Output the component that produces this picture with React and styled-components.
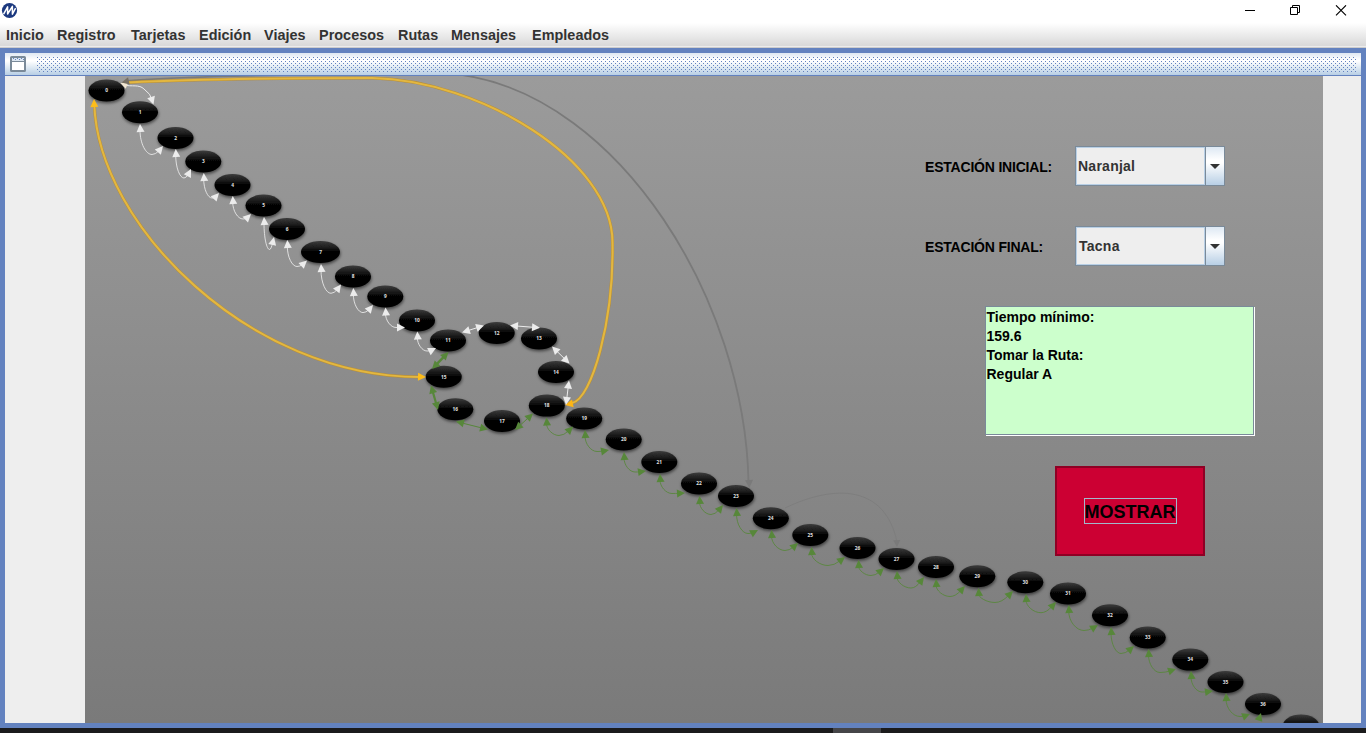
import React from 'react';
import styled, { createGlobalStyle, css } from 'styled-components';

const frame = '#6382bf';

const GlobalStyle = createGlobalStyle`
  * { box-sizing: border-box; }
  html, body { margin: 0; padding: 0; overflow: hidden; }
  body { font-family: "Liberation Sans", Arial, sans-serif; font-weight: bold; }
`;

const Window = styled.div`
  width: 1366px;
  height: 733px;
  display: flex;
  flex-direction: column;
  background: #fff;
  overflow: hidden;
`;

const TitleBar = styled.header`
  height: 23px;
  flex: none;
  display: flex;
  justify-content: space-between;
  padding: 2px 19px 0 1px;
  background: #fff;
`;

const WindowButtons = styled.div`
  display: flex;
  gap: 34px;
  padding-top: 3px;
  svg { display: block; }
`;

const MenuBar = styled.nav`
  height: 25px;
  flex: none;
  display: flex;
  gap: 13px;
  padding: 0 6px;
  background: linear-gradient(#fff 0, #dadada 22px, #dadada 23px, #ececec 23px, #ececec 24px, #cccccc 24px);
`;

const MenuItem = styled.span`
  width: ${(p) => p.$width}px;
  font-size: 14.4px;
  line-height: 24px;
  letter-spacing: 0.04px;
  white-space: nowrap;
  color: #333;
`;

const InternalFrame = styled.main`
  height: 680px;
  flex: none;
  display: flex;
  flex-direction: column;
  border: 5px solid ${frame};
`;

const FrameTitle = styled.div`
  height: 23px;
  flex: none;
  display: flex;
  align-items: flex-start;
  padding: 3px 4px 0 5px;
  gap: 11px;
  border-bottom: 1px solid ${frame};
  background: linear-gradient(#dfe8f3 0, #fff 7px, #fff 8px, #b8cfe5 22px);
  svg { flex: none; display: block; }
`;

const Grip = styled.div`
  flex: 1;
  height: 15px;
  margin-top: 1px;
  background-image:
    conic-gradient(from 270deg at 1px 1px, ${frame} 90deg, transparent 0),
    conic-gradient(from 270deg at 1px 1px, ${frame} 90deg, transparent 0);
  background-size: 4px 4px;
  background-position: 0 0, 2px 2px;
`;

const Content = styled.div`
  flex: 1;
  display: flex;
  justify-content: center;
  padding: 0 38px 0 80px;
  background: #eee;
`;

const MapPanel = styled.section`
  position: relative;
  width: 1238px;
  height: 647px;
  display: flex;
  justify-content: flex-end;
  overflow: hidden;
  background: linear-gradient(#9b9b9b, #7a7a7a);
`;

const Network = styled.svg`
  position: absolute;
  inset: 0;
`;

const Form = styled.form`
  position: relative;
  width: 398px;
  padding-top: 70px;
  display: flex;
  flex-direction: column;
  align-items: flex-start;
`;

const Field = styled.div`
  width: 300px;
  height: 40px;
  margin-bottom: 40px;
  display: flex;
  align-items: center;
  justify-content: space-between;
`;

const Label = styled.label`
  font-size: 14px;
  line-height: 16px;
  padding-top: 2px;
  letter-spacing: -0.2px;
  color: #000;
  white-space: nowrap;
`;

const Combo = styled.div`
  width: 150px;
  height: 40px;
  display: flex;
  border: 1px solid #7a8a99;
`;

const ComboValue = styled.div`
  flex: 1;
  padding-left: ${(p) => p.$indent}px;
  border: 1px solid #b8cfe5;
  background: #eee;
  color: #333;
  font-size: 14px;
  line-height: 37px;
  letter-spacing: 0.25px;
`;

const ComboArrow = styled.div`
  width: 19px;
  border-left: 1px solid #7a8a99;
  display: flex;
  align-items: center;
  justify-content: center;
  background: linear-gradient(#dde8f3, #fff 35%, #fff 42%, #b8cfe5);
  svg { display: block; margin-top: 1px; }
`;

const etched = css`
  border: 1px solid #7a8a99;
  box-shadow: 1px 1px 0 #fff;
`;

const Result = styled.div`
  ${etched}
  width: 269px;
  height: 129px;
  margin: 0 0 0 60px;
  padding: 1px 0 0 0.5px;
  background: #cfc;
  color: #000;
  font-size: 14px;
  line-height: 19px;
  white-space: pre-line;
`;

const ShowButton = styled.button`
  width: 150px;
  height: 90px;
  margin: 31px 0 0 130px;
  padding: 0;
  display: flex;
  align-items: center;
  justify-content: center;
  border: 2px solid #8f0024;
  background: #cc0033;
  color: #000;
  font: bold 18px "Liberation Sans", Arial, sans-serif;
`;

const FocusRing = styled.span`
  width: 93px;
  height: 26px;
  border: 1px solid #a3b8cc;
  line-height: 26px;
  text-align: center;
  white-space: nowrap;
`;

const TaskBar = styled.footer`
  flex: 1;
  display: flex;
  background: #1b1b1c;
`;

const ActiveTask = styled.div`
  width: 48px;
  margin-left: 833px;
  background: #454548;
`;

const menus = [
  ['Inicio', 38], ['Registro', 61], ['Tarjetas', 55], ['Edición', 52], ['Viajes', 42],
  ['Procesos', 66], ['Rutas', 40], ['Mensajes', 68], ['Empleados', 78],
];

const stations = [
  [106.5, 90.5], [140, 112.3], [175.5, 138], [203.3, 161.5], [232.5, 185], [263.5, 205.5],
  [287, 229], [320.5, 252], [353, 276.5], [385.3, 296.5], [417, 320.5], [448, 340.5],
  [496.7, 333], [539, 338.5], [556, 372], [443.7, 376.7], [455.3, 409.3], [502, 421],
  [546.8, 405.6], [584.2, 418.5], [623.7, 439.5], [659.3, 462], [699, 483.5], [736, 496],
  [770.8, 518.3], [810.3, 535], [857.5, 548], [896.5, 559], [936, 567], [977.3, 576.3],
  [1025.3, 582.3], [1068, 593.5], [1110, 615.3], [1147.7, 637.5], [1190.3, 659.6],
  [1225.5, 682], [1263, 704], [1301, 725.5],
];

const white = '#ececec';
const green = '#57873a';

// Each hop: start tip, lowest point of the sag, end tip.
const whiteHops = [
  [140, 124, 152, 154.5, 163, 146], [175.7, 149, 184, 178, 191, 169],
  [203.7, 173, 212, 198, 219, 193], [232.7, 196, 243, 219, 251, 214],
  [264, 217, 269.5, 249.5, 274, 237], [287.3, 240, 297, 266.5, 307, 260.5],
  [321, 264, 331, 293.3, 341, 284.5], [353.3, 288, 363, 312.6, 373, 305],
  [385.5, 307.5, 396, 327.5, 405, 327.5], [417.3, 331.5, 427, 351, 436, 348],
];

const greenHops = [
  [546.5, 417.5, 559, 435.5, 573, 426.5], [585, 430, 597, 451.5, 609, 450],
  [624, 452, 635, 472, 646, 471], [660, 474, 672, 493.5, 685, 493],
  [699.5, 496, 711, 514.5, 723, 505], [736.5, 508, 748, 533.5, 758, 530],
  [771.5, 530, 785, 550.5, 798, 543], [811.5, 547, 828, 565.5, 845, 557],
  [858.5, 560, 871, 575.5, 884, 568], [897, 571, 911, 588, 924, 577],
  [936, 579, 950, 596.5, 965, 586], [978.5, 588, 995, 602.5, 1013, 591],
  [1026, 594, 1041, 612.7, 1056, 602], [1068.7, 605, 1084, 630.5, 1098, 625],
  [1111, 627, 1121, 653.5, 1134, 646], [1148.5, 649, 1160, 672.5, 1176, 669],
  [1191, 671, 1202, 692, 1213, 691], [1226, 693, 1240, 716.5, 1250, 714],
];

const links = [
  { from: [462, 332.5], to: [484, 325.5], color: white },
  { from: [510, 325.5], to: [540, 327.8], color: white },
  { from: [552, 346.5], to: [569.5, 363.5], color: white },
  { from: [569, 380.5], to: [566, 405], color: white },
  { from: [432, 369], to: [448.5, 352], color: green, width: 2.4 },
  { from: [431, 385.5], to: [438, 410], color: green, width: 2.2 },
  { from: [456, 421.5], to: [488, 429.5], color: green },
  { from: [515, 430], to: [533, 413.5], color: green },
];

function Head({ x, y, angle, color, size = 8 }) {
  return (
    <path
      d={`M0 0L${-size} ${-size / 2}L${-size} ${size / 2}Z`}
      transform={`translate(${x} ${y}) rotate(${angle})`}
      fill={color}
    />
  );
}

function Hop({ points, color }) {
  const [sx, sy, bx, by, ex, ey] = points;
  const angle = (Math.atan2(ey - by, (ex - bx) * 0.65) * 180) / Math.PI;
  const rad = (angle * Math.PI) / 180;
  const tx = ex - 6 * Math.cos(rad);
  const ty = ey - 6 * Math.sin(rad);
  return (
    <g>
      <path
        d={`M${sx} ${sy + 6}C${sx} ${sy + (by - sy) * 0.65} ${bx - (bx - sx) * 0.5} ${by} ${bx} ${by}Q${(bx + tx) / 2} ${by} ${tx} ${ty}`}
        fill="none" stroke={color} strokeWidth="1" strokeOpacity="0.85"
      />
      <Head x={sx} y={sy} angle={-94} color={color} />
      <Head x={ex} y={ey} angle={angle} color={color} />
    </g>
  );
}

function Link({ from, to, color, width = 1 }) {
  const rad = Math.atan2(to[1] - from[1], to[0] - from[0]);
  const deg = (rad * 180) / Math.PI;
  const dx = 5 * Math.cos(rad);
  const dy = 5 * Math.sin(rad);
  return (
    <g>
      <line x1={from[0] + dx} y1={from[1] + dy} x2={to[0] - dx} y2={to[1] - dy} stroke={color} strokeWidth={width} />
      <Head x={from[0]} y={from[1]} angle={deg + 180} color={color} />
      <Head x={to[0]} y={to[1]} angle={deg} color={color} />
    </g>
  );
}

const expressRoutes = [
  'M94.3 104C98 225 250 377 420 377',
  'M128 82.5C200 79 290 78 372 78C480 80 612 160 612.5 242C614 320 592 399 572 403',
];

function StationNetwork() {
  return (
    <Network width="1238" height="647" viewBox="85 76 1238 647">
      <defs>
        <linearGradient id="node" x1="0" y1="0" x2="0" y2="1">
          <stop offset="0" stopColor="#3c3c3c" />
          <stop offset="0.38" stopColor="#111" />
          <stop offset="0.5" stopColor="#000" />
          <stop offset="1" stopColor="#060606" />
        </linearGradient>
        <filter id="shade" x="-20%" y="-30%" width="140%" height="170%">
          <feDropShadow dx="0.5" dy="1.7" stdDeviation="1.5" floodColor="#000" floodOpacity="0.55" />
        </filter>
      </defs>
      {stations.map(([x, y], i) => (
        <g key={i}>
          <ellipse cx={x} cy={y} rx={i === 7 ? 19.5 : 18} ry="11" fill="url(#node)" filter="url(#shade)" />
          {y < 720 && (
            <text x={x} y={y + 1.8} fontSize="4.8" textAnchor="middle" fill="#e2e2e2" fontFamily="Open Sans" fontWeight="bold">{i}</text>
          )}
        </g>
      ))}
      <g fill="none">
        <path d="M126 81C180 76 280 75 360 74C400 72 440 71 462 75C620 98 745 300 748.5 482" stroke="#7a7a7a" strokeWidth="1.8" />
        <path d="M785 508C835 484 885 485 897 542" stroke="#7d7d7d" strokeWidth="0.9" />
        {expressRoutes.map((d) => (
          <g key={d}>
            <path d={d} stroke="#b98f35" strokeWidth="3" />
            <path d={d} stroke="#e3b740" strokeWidth="2.1" />
          </g>
        ))}
        <path d="M124 85C132 87 139 84 144 89Q151 94 152 100" stroke={white} strokeWidth="1" />
      </g>
      <Head x={120.5} y={83} angle={-158} color="#f1e6d2" size={7} />
      <Head x={153.5} y={104.5} angle={72} color={white} />
      <Head x={121.5} y={82.5} angle={168} color="#777064" size={7.5} />
      <Head x={94} y={99} angle={-92} color="#fdbd1b" />
      <Head x={426} y={377} angle={2} color="#fdbd1b" />
      <Head x={565} y={405} angle={168} color="#fdb515" />
      <Head x={749.3} y={488} angle={88} color="#7a7a7a" />
      <Head x={897} y={547} angle={88} color="#7a7a7a" size={7} />
      {whiteHops.map((p) => <Hop key={p[0]} points={p} color={white} />)}
      {greenHops.map((p) => <Hop key={p[0]} points={p} color={green} />)}
      {links.map((l) => <Link key={l.from.join()} {...l} />)}
      <Head x={1261} y={713} angle={-72} color={green} />
    </Network>
  );
}

function Logo() {
  return (
    <svg width="17" height="17" viewBox="0 0 17 17">
      <circle cx="8.5" cy="8.5" r="7.6" fill="#1c397f" />
      <path d="M2.6 12.2L6.6 4.8V12L11.4 4.4V12.2L14.6 6.2" fill="none" stroke="#fff" strokeWidth="1.5" strokeLinejoin="round" />
    </svg>
  );
}

function FrameIcon() {
  return (
    <svg width="16" height="16" viewBox="0 0 16 16">
      <rect x="1" y="1" width="14" height="14" rx="0.6" fill="#fff" stroke="#7a8a99" strokeWidth="2" />
      <rect x="2" y="2" width="12" height="3" fill="#dce6f0" />
      <path d="M2 5.5H14" stroke="#7a8a99" />
      <path d="M3 2.5H14" stroke="#6382bf" strokeDasharray="1 3" />
      <path d="M5 3.5H14" stroke="#6382bf" strokeDasharray="1 3" />
    </svg>
  );
}

function Select({ value, indent }) {
  return (
    <Combo>
      <ComboValue $indent={indent}>{value}</ComboValue>
      <ComboArrow>
        <svg width="10" height="5" viewBox="0 0 10 5"><path d="M0 0H10L5 5Z" fill="#333" /></svg>
      </ComboArrow>
    </Combo>
  );
}

export default function App() {
  return (
    <Window>
      <GlobalStyle />
      <TitleBar>
        <Logo />
        <WindowButtons>
          <svg width="11" height="11" viewBox="0 0 11 11"><path d="M0 5.5H10" stroke="#000" /></svg>
          <svg width="11" height="11" viewBox="0 0 11 11"><path d="M.5 2.5H7.5V9.5H.5ZM2.5 2.5V.5H9.5V7.5H7.5" fill="none" stroke="#000" /></svg>
          <svg width="12" height="11" viewBox="0 0 12 11"><path d="M1 .3L11 10.3M11 .3L1 10.3" stroke="#000" strokeWidth="1.1" /></svg>
        </WindowButtons>
      </TitleBar>
      <MenuBar>
        {menus.map(([name, width]) => <MenuItem key={name} $width={width}>{name}</MenuItem>)}
      </MenuBar>
      <InternalFrame>
        <FrameTitle>
          <FrameIcon />
          <Grip />
        </FrameTitle>
        <Content>
          <MapPanel>
            <StationNetwork />
            <Form onSubmit={(e) => e.preventDefault()}>
              <Field><Label>ESTACIÓN INICIAL:</Label><Select value="Naranjal" indent={1} /></Field>
              <Field><Label>ESTACIÓN FINAL:</Label><Select value="Tacna" indent={2} /></Field>
              <Result>{'Tiempo mínimo:\n159.6\nTomar la Ruta:\nRegular A'}</Result>
              <ShowButton><FocusRing>MOSTRAR</FocusRing></ShowButton>
            </Form>
          </MapPanel>
        </Content>
      </InternalFrame>
      <TaskBar><ActiveTask /></TaskBar>
    </Window>
  );
}
